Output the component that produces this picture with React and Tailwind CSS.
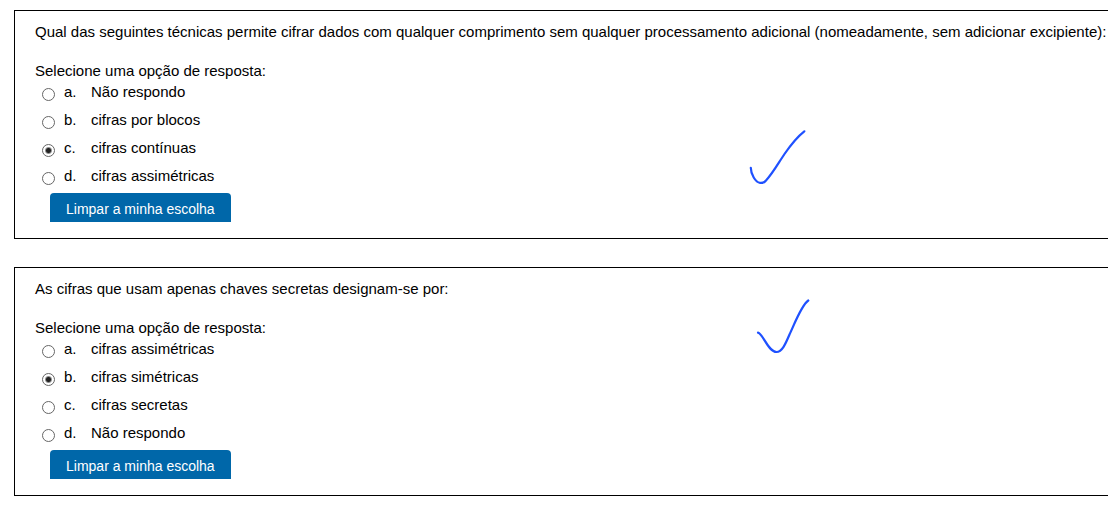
import { useState } from 'react';

const questions = [
  {
    id: 'q1',
    text: 'Qual das seguintes técnicas permite cifrar dados com qualquer comprimento sem qualquer processamento adicional (nomeadamente, sem adicionar excipiente):',
    options: ['Não respondo', 'cifras por blocos', 'cifras contínuas', 'cifras assimétricas'],
    selected: 2,
    tickPosition: 'top-[109px] left-[725px]',
    tickPath:
      'M10.800 47.800 C10.800 54 15.500 62.500 20 62.800 C22 63 24.500 62.500 26 60.500 C33 53 39 42 44.500 34 C51 24.500 57 17 64.300 11.300',
  },
  {
    id: 'q2',
    text: 'As cifras que usam apenas chaves secretas designam-se por:',
    options: ['cifras assimétricas', 'cifras simétricas', 'cifras secretas', 'Não respondo'],
    selected: 1,
    tickPosition: 'top-[22px] left-[725px]',
    tickPath:
      'M18 42.700 C23 43.500 28 62 36.500 62 C42 62 45.500 54 49.500 44.500 C54.500 34 61.500 15 68.300 10.500',
  },
];

// Handwritten tick drawn over a card.
function Tick({ position, path }) {
  return (
    <svg
      className={`pointer-events-none absolute ${position}`}
      width="80"
      height="75"
      viewBox="0 0 80 75"
      fill="none"
      stroke="#1f51ff"
      strokeWidth="2.200"
      strokeLinecap="round"
      strokeLinejoin="round"
      aria-hidden="true"
    >
      <path d={path} />
    </svg>
  );
}

function Question({ question }) {
  const [choice, setChoice] = useState(question.selected);
  return (
    <section className="relative border border-r-0 border-black pt-[11px] pb-4 pl-5">
      <p className="whitespace-nowrap">{question.text}</p>
      <fieldset className="mt-[19px]">
        <legend>Selecione uma opção de resposta:</legend>
        <div className="mt-px flex flex-col gap-2 pl-[7px]">
          {question.options.map((option, i) => (
            <div key={option} className="flex items-center">
              <input
                type="radio"
                id={`${question.id}-${i}`}
                name={question.id}
                checked={choice === i}
                onChange={() => setChoice(i)}
                className="mt-1 size-[13px] shrink-0 appearance-none rounded-full border border-[#666] bg-white checked:bg-[radial-gradient(circle,#222_0_2px,transparent_4px)]"
              />
              <label htmlFor={`${question.id}-${i}`} className="flex pl-[9px]">
                <span className="w-[27px]">{'abcd'[i]}.</span>
                <span>{option}</span>
              </label>
            </div>
          ))}
        </div>
      </fieldset>
      <button
        type="button"
        onClick={() => setChoice(null)}
        className="mt-[7px] ml-[15px] block h-[29px] rounded-t bg-[#0067a9] px-4 pt-[3px] text-sm text-white"
      >
        Limpar a minha escolha
      </button>
      <Tick position={question.tickPosition} path={question.tickPath} />
    </section>
  );
}

export default function App() {
  return (
    <main className="flex flex-col gap-7 overflow-hidden bg-white pt-[10px] pb-4 pl-[14px] font-['Liberation_Sans',Arial,sans-serif] text-[15px] leading-5 text-black">
      {questions.map((q) => (
        <Question key={q.id} question={q} />
      ))}
    </main>
  );
}
